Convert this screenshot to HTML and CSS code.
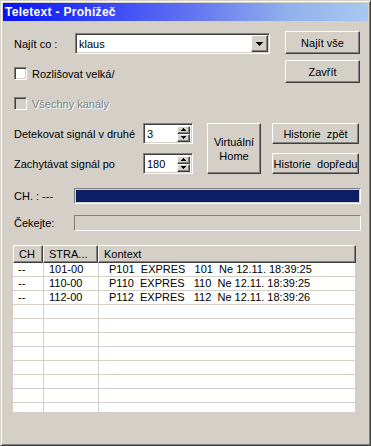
FILE: index.html
```html
<!DOCTYPE html>
<html>

<head>
    <title>Teletext - Prohížeč</title>
    <link rel="stylesheet" href="styles.css">
</head>

<body>
    <div class="window">
        <div class="titlebar">Teletext - Prohížeč</div>
        <div class="content">

            <div class="row-top">
                <div class="col-left">
                    <div class="find-row">
                        <span class="find-label">Najít co :</span>
                        <div class="combo">
                            <span class="combo-text">klaus</span>
                            <span class="combo-btn">
                                <svg width="7" height="4" viewBox="0 0 7 4" shape-rendering="crispEdges"><path d="M0 0h7v1h-1v1h-1v1h-1v1h-1v-1h-1v-1h-1v-1h-1z" fill="#000"/></svg>
                            </span>
                        </div>
                    </div>
                    <div class="check"><span class="box"></span>Rozlišovat velká/</div>
                    <div class="check check-off"><span class="box"></span>Všechny kanály</div>
                </div>
                <div class="col-buttons">
                    <button class="btn btn-wide">Najít vše</button>
                    <button class="btn btn-wide">Zavřít</button>
                </div>
            </div>

            <div class="row-mid">
                <div class="spins">
                    <div class="spin-row">
                        <span class="spin-label">Detekovat signál v druhé</span>
                        <div class="spin">
                            <span class="spin-text">3</span>
                            <span class="spin-arrows">
                                <span class="arrow"><svg width="5" height="3" viewBox="0 0 5 3" shape-rendering="crispEdges"><path d="M2 0h1v1h1v1h1v1h-5v-1h1v-1h1z" fill="#000"/></svg></span>
                                <span class="arrow"><svg width="5" height="3" viewBox="0 0 5 3" shape-rendering="crispEdges"><path d="M0 0h5v1h-1v1h-1v1h-1v-1h-1v-1h-1z" fill="#000"/></svg></span>
                            </span>
                        </div>
                    </div>
                    <div class="spin-row">
                        <span class="spin-label">Zachytávat signál po</span>
                        <div class="spin">
                            <span class="spin-text">180</span>
                            <span class="spin-arrows">
                                <span class="arrow"><svg width="5" height="3" viewBox="0 0 5 3" shape-rendering="crispEdges"><path d="M2 0h1v1h1v1h1v1h-5v-1h1v-1h1z" fill="#000"/></svg></span>
                                <span class="arrow"><svg width="5" height="3" viewBox="0 0 5 3" shape-rendering="crispEdges"><path d="M0 0h5v1h-1v1h-1v1h-1v-1h-1v-1h-1z" fill="#000"/></svg></span>
                            </span>
                        </div>
                    </div>
                </div>
                <button class="btn btn-home">Virtuální<br>Home</button>
                <div class="hist">
                    <button class="btn btn-hist">Historie&nbsp; zpět</button>
                    <button class="btn btn-hist">Historie&nbsp; dopředu</button>
                </div>
            </div>

            <div class="progress-block">
                <div class="prog-row">
                    <span class="prog-label">CH. : ---</span>
                    <div class="prog"><div class="prog-fill"></div></div>
                </div>
                <div class="prog-row">
                    <span class="prog-label">Čekejte:</span>
                    <div class="prog"></div>
                </div>
            </div>

            <div class="list">
                <div class="list-head">
                    <div class="hcell c-ch">CH</div>
                    <div class="hcell c-str">STRA...</div>
                    <div class="hcell c-ctx">Kontext</div>
                </div>
                <div class="list-row">
                    <div class="cell c-ch">--</div>
                    <div class="cell c-str">101-00</div>
                    <div class="cell c-ctx">P101  EXPRES   101  Ne 12.11. 18:39:25</div>
                </div>
                <div class="list-row">
                    <div class="cell c-ch">--</div>
                    <div class="cell c-str">110-00</div>
                    <div class="cell c-ctx">P110  EXPRES   110  Ne 12.11. 18:39:25</div>
                </div>
                <div class="list-row">
                    <div class="cell c-ch">--</div>
                    <div class="cell c-str">112-00</div>
                    <div class="cell c-ctx">P112  EXPRES   112  Ne 12.11. 18:39:26</div>
                </div>
                <div class="list-row"><div class="cell c-ch"></div><div class="cell c-str"></div><div class="cell c-ctx"></div></div>
                <div class="list-row"><div class="cell c-ch"></div><div class="cell c-str"></div><div class="cell c-ctx"></div></div>
                <div class="list-row"><div class="cell c-ch"></div><div class="cell c-str"></div><div class="cell c-ctx"></div></div>
                <div class="list-row"><div class="cell c-ch"></div><div class="cell c-str"></div><div class="cell c-ctx"></div></div>
                <div class="list-row"><div class="cell c-ch"></div><div class="cell c-str"></div><div class="cell c-ctx"></div></div>
                <div class="list-row"><div class="cell c-ch"></div><div class="cell c-str"></div><div class="cell c-ctx"></div></div>
                <div class="list-row"><div class="cell c-ch"></div><div class="cell c-str"></div><div class="cell c-ctx"></div></div>
                <div class="list-row"><div class="cell c-ch"></div><div class="cell c-str"></div><div class="cell c-ctx"></div></div>
            </div>

        </div>
    </div>
</body>

</html>
```

FILE: styles.css
```css
body {
    margin: 0;
    font-family: "Liberation Sans", Arial, sans-serif;
    font-size: 11px;
}

.window {
    width: 371px;
    height: 446px;
    box-sizing: border-box;
    border: 1px solid;
    border-color: #d4d0c8 #404040 #404040 #d4d0c8;
    box-shadow: inset 1px 1px #fff, inset -1px -1px #808080;
    padding: 2px;
    background-color: #d4d0c8;
    color: #000;
}

.titlebar {
    height: 18px;
    line-height: 18px;
    padding-left: 2px;
    color: #fff;
    font-weight: bold;
    font-size: 12px;
    letter-spacing: 0.3px;
    background: linear-gradient(to right, #0814f4, #2838f8 20%, #6070f0 50%, #90b0ec 78%, #a8c8f0);
}

.content {
    padding-left: 11px;
}

/* sunken and raised edges, windows classic */
.combo,
.spin,
.box {
    border: 1px solid;
    border-color: #808080 #fff #fff #808080;
    box-shadow: inset 1px 1px #404040, inset -1px -1px #d4d0c8;
    box-sizing: border-box;
    background-color: #fff;
}

.btn,
.combo-btn,
.arrow,
.hcell {
    border: 1px solid;
    border-color: #fff #404040 #404040 #fff;
    box-shadow: inset -1px -1px #808080;
    box-sizing: border-box;
    background-color: #d4d0c8;
}

.btn {
    font-family: "Liberation Sans", Arial, sans-serif;
    font-size: 11px;
    color: #000;
    padding: 0;
    margin: 0;
}

.row-top {
    display: flex;
    margin-top: 10px;
}

.col-left {
    width: 271px;
}

.find-row {
    display: flex;
    align-items: center;
    margin-top: 2px;
    height: 21px;
}

.find-label {
    width: 61px;
}

.combo {
    width: 195px;
    height: 21px;
    display: flex;
    align-items: center;
}

.combo-text {
    flex: 1;
    padding-left: 3px;
}

.combo-btn {
    width: 17px;
    height: 17px;
    margin-right: 1px;
    display: flex;
    align-items: center;
    justify-content: center;
}

.check {
    display: flex;
    align-items: center;
    height: 13px;
    margin-top: 13px;
}

.check .box {
    width: 13px;
    height: 13px;
    margin-right: 5px;
}

.check-off {
    margin-top: 17px;
    color: #808080;
    text-shadow: 1px 1px #fff;
}

.check-off .box {
    background-color: #d4d0c8;
}

.col-buttons {
    display: flex;
    flex-direction: column;
    gap: 6px;
}

.btn-wide {
    width: 75px;
    height: 23px;
}

.row-mid {
    display: flex;
    align-items: flex-start;
    margin-top: 13px;
}

.spins {
    width: 193px;
    display: flex;
    flex-direction: column;
    gap: 9px;
}

.spin-row {
    display: flex;
    align-items: center;
    height: 21px;
}

.spin-label {
    width: 129px;
}

.spin {
    width: 50px;
    height: 21px;
    display: flex;
    align-items: center;
}

.spin-text {
    flex: 1;
    padding-left: 3px;
}

.spin-arrows {
    display: flex;
    flex-direction: column;
    margin-right: 2px;
}

.arrow {
    width: 13px;
    height: 8px;
    display: flex;
    align-items: center;
    justify-content: center;
}

.btn-home {
    width: 54px;
    height: 51px;
    line-height: 14px;
}

.hist {
    margin-left: 11px;
    display: flex;
    flex-direction: column;
    gap: 9px;
}

.btn-hist {
    width: 87px;
    height: 21px;
}

.progress-block {
    margin-top: 14px;
    display: flex;
    flex-direction: column;
    gap: 11px;
}

.prog-row {
    display: flex;
    align-items: center;
    height: 16px;
}

.prog-label {
    width: 60px;
}

.prog {
    width: 287px;
    height: 16px;
    box-sizing: border-box;
    border: 1px solid;
    border-color: #808080 #fff #fff #808080;
    padding: 1px;
}

.prog-fill {
    height: 100%;
    background-color: #0e1e66;
}

.list {
    margin-top: 14px;
    margin-left: -1px;
    width: 343px;
    height: 167px;
    overflow: hidden;
    background-color: #fff;
}

.list-head {
    display: flex;
    height: 18px;
    background-color: #d4d0c8;
}

.hcell {
    height: 18px;
    line-height: 16px;
    padding-left: 5px;
}

.list-head .c-ch {
    width: 30px;
}

.list-head .c-str {
    width: 55px;
}

.list-head .c-ctx {
    flex: 1;
}

.list-row {
    display: flex;
    height: 14px;
}

.cell {
    box-sizing: border-box;
    height: 14px;
    line-height: 13px;
    border-right: 1px solid #d4d0c8;
    border-bottom: 1px solid #d4d0c8;
    padding-left: 5px;
    white-space: pre;
}

.list-row .c-ch {
    width: 31px;
}

.list-row .c-str {
    width: 55px;
}

.list-row .c-ctx {
    flex: 1;
    padding-left: 10px;
}
```
